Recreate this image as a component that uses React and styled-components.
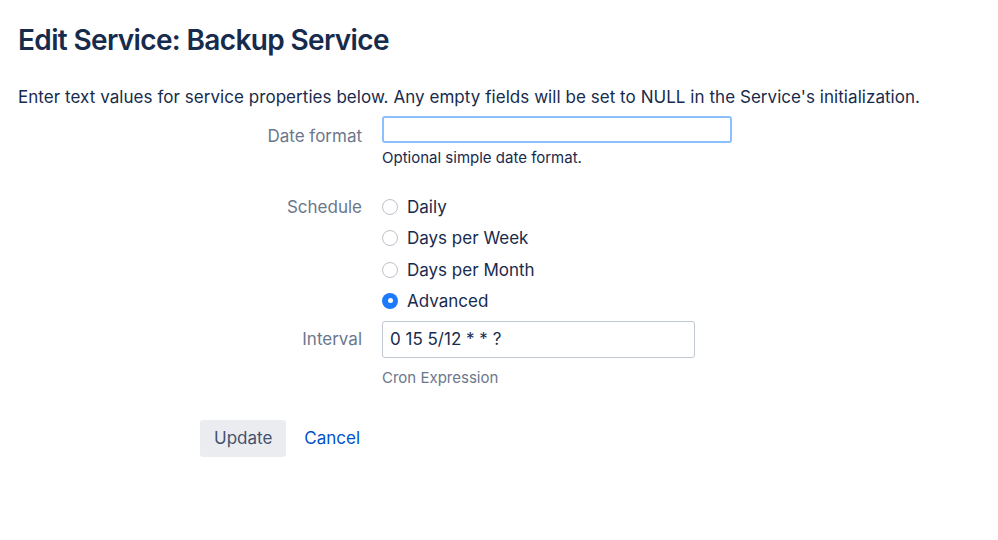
import React, { useState } from "react";
import styled, { createGlobalStyle } from "styled-components";

const GlobalStyle = createGlobalStyle`
  body {
    margin: 0;
    background: #fff;
    font-family: Inter, "Noto Sans", "Liberation Sans", sans-serif;
    color: #172b4d;
  }
`;

const Page = styled.div`
  padding: 20px 18px 0;
`;

const Title = styled.h1`
  margin: 0;
  font-size: 28px;
  line-height: 40px;
  font-weight: 600;
  letter-spacing: -0.65px;
  color: #172b4d;
`;

const Intro = styled.p`
  margin: 26px 0 0;
  font-size: 17px;
  line-height: 22px;
  letter-spacing: 0.05px;
  color: #172b4d;
`;

const Row = styled.div`
  display: grid;
  grid-template-columns: 344px 1fr;
  column-gap: 20px;
  margin-top: ${p => p.$top || 0}px;
`;

const Label = styled.label`
  text-align: right;
  font-size: 17px;
  line-height: 22px;
  color: #6b778c;
  padding-top: ${p => p.$pad || 0}px;
`;

const TextInput = styled.input`
  box-sizing: border-box;
  display: block;
  width: ${p => p.$width}px;
  height: ${p => p.$height}px;
  padding: 0 7px;
  font-family: inherit;
  font-size: 17px;
  color: #172b4d;
  border-radius: 3px;
  outline: none;
  border: ${p => (p.$focused ? "2px solid #8cc0fc" : "1px solid #c1c7d0")};
  background: #fff;
`;

const Hint = styled.div`
  margin-top: ${p => p.$top || 6}px;
  font-size: 15px;
  line-height: 20px;
  color: ${p => (p.$muted ? "#6b778c" : "#172b4d")};
`;

const RadioList = styled.div`
  display: flex;
  flex-direction: column;
  gap: 9.3px;
`;

const RadioItem = styled.label`
  display: flex;
  align-items: center;
  gap: 9px;
  font-size: 17px;
  line-height: 22px;
  color: #172b4d;
  cursor: pointer;
`;

const RadioDot = styled.span`
  box-sizing: border-box;
  width: 16px;
  height: 16px;
  border-radius: 50%;
  flex: none;
  display: flex;
  align-items: center;
  justify-content: center;
  border: ${p => (p.$checked ? "none" : "1.5px solid #bcc1ca")};
  background: ${p => (p.$checked ? "#1d7afc" : "#fff")};
  &::after {
    content: "";
    display: ${p => (p.$checked ? "block" : "none")};
    width: 5px;
    height: 5px;
    border-radius: 50%;
    background: #fff;
  }
`;

const Actions = styled.div`
  display: flex;
  align-items: center;
  gap: 18px;
  margin-top: 32px;
  padding-left: 182px;
`;

const Button = styled.button`
  height: 37px;
  padding: 0 14px;
  border: none;
  border-radius: 3px;
  background: #ebecf0;
  color: #42526e;
  font-family: inherit;
  font-size: 17px;
  cursor: pointer;
`;

const LinkButton = styled.a`
  font-size: 17px;
  color: #0052cc;
  text-decoration: none;
  cursor: pointer;
`;

const options = ["Daily", "Days per Week", "Days per Month", "Advanced"];

export default function App() {
  const [schedule, setSchedule] = useState("Advanced");
  const [dateFormat, setDateFormat] = useState("");
  const [interval, setInterval] = useState("0 15 5/12 * * ?");

  return (
    <Page>
      <GlobalStyle />
      <Title>Edit Service: Backup Service</Title>
      <Intro>
        Enter text values for service properties below. Any empty fields will be set to NULL in the Service's initialization.
      </Intro>

      <Row $top={8}>
        <Label $pad={9}>Date format</Label>
        <div>
          <TextInput
            $focused
            $width={350}
            $height={27}
            value={dateFormat}
            onChange={e => setDateFormat(e.target.value)}
          />
          <Hint $top={5}>Optional simple date format.</Hint>
        </div>
      </Row>

      <Row $top={28}>
        <Label>Schedule</Label>
        <RadioList>
          {options.map(opt => (
            <RadioItem key={opt} onClick={() => setSchedule(opt)}>
              <RadioDot $checked={schedule === opt} />
              {opt}
            </RadioItem>
          ))}
        </RadioList>
      </Row>

      <Row $top={9}>
        <Label $pad={7}>Interval</Label>
        <div>
          <TextInput
            $width={313}
            $height={37}
            value={interval}
            onChange={e => setInterval(e.target.value)}
          />
          <Hint $muted $top={10}>Cron Expression</Hint>
        </div>
      </Row>

      <Actions>
        <Button>Update</Button>
        <LinkButton>Cancel</LinkButton>
      </Actions>
    </Page>
  );
}
